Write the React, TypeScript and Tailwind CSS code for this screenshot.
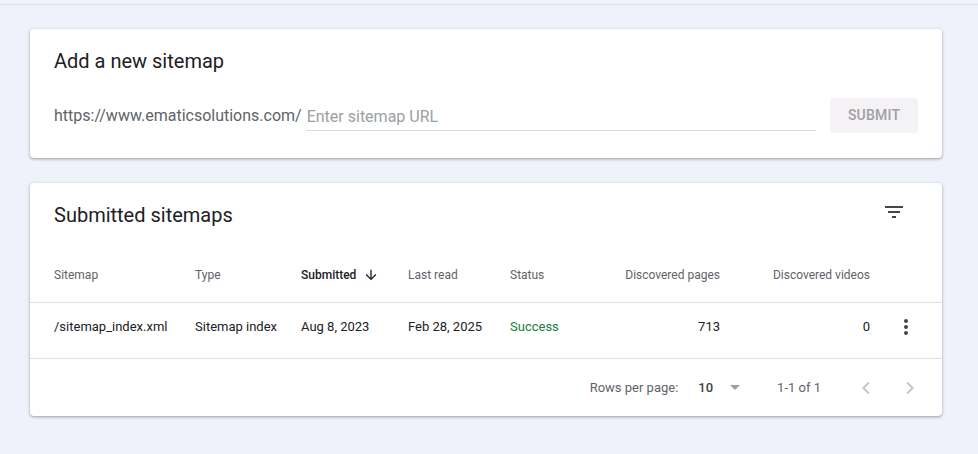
import React from 'react';

const FilterIcon = () => (
  <svg width="24" height="24" viewBox="0 0 24 24" className="fill-[#444746]">
    <path d="M10 18h4v-2h-4v2zM3 6v2h18V6H3zm3 7h12v-2H6v2z" />
  </svg>
);

const MoreVertIcon = () => (
  <svg width="24" height="24" viewBox="0 0 24 24" className="fill-[#444746]">
    <path d="M12 8c1.1 0 2-.9 2-2s-.9-2-2-2-2 .9-2 2 .9 2 2 2zm0 2c-1.1 0-2 .9-2 2s.9 2 2 2 2-.9 2-2-.9-2-2-2zm0 6c-1.1 0-2 .9-2 2s.9 2 2 2 2-.9 2-2-.9-2-2-2z" />
  </svg>
);

const ArrowDownIcon = () => (
  <svg width="16" height="16" viewBox="0 0 24 24" className="fill-[#202124]">
    <path d="M20 12l-1.41-1.41L13 16.17V4h-2v12.17l-5.58-5.59L4 12l8 8 8-8z" />
  </svg>
);

const ChevronLeft = () => (
  <svg width="24" height="24" viewBox="0 0 24 24" className="fill-[#c4c7c5]">
    <path d="M15.41 7.41L14 6l-6 6 6 6 1.41-1.41L10.83 12z" />
  </svg>
);

const ChevronRight = () => (
  <svg width="24" height="24" viewBox="0 0 24 24" className="fill-[#c4c7c5]">
    <path d="M10 6L8.59 7.41 13.17 12l-4.58 4.59L10 18l6-6z" />
  </svg>
);

const cardClass =
  'bg-white rounded-[4px] shadow-[0_1px_2px_rgba(60,64,67,0.3),0_1px_3px_1px_rgba(60,64,67,0.15)]';

const cols = 'grid grid-cols-[141px_106px_107px_102px_102px_1fr_150px_48px] px-6';

export default function App() {
  return (
    <div className="min-h-screen bg-[#f0f2fb] font-['Roboto',sans-serif] text-[#202124]">
      <div className="h-[4px]" />
      <div className="border-t border-[#dcdee6]" />

      <div className="pl-[30px] pt-6 pb-10 flex flex-col gap-[25px]">
        {/* add sitemap */}
        <div className={`${cardClass} w-[912px] h-[129px] px-6 pt-5`}>
          <h2 className="text-[20px] leading-6 font-normal">Add a new sitemap</h2>
          <div className="flex items-center mt-[25px]">
            <span className="text-[16px] text-[#5f6368] leading-5 mr-[4px] mt-[1px]">
              https://www.ematicsolutions.com/
            </span>
            <div className="w-[510px] h-[31px] border-b border-[#dadce0] flex items-end pb-[3px]">
              <span className="text-[16px] text-[#9aa0a6] leading-5 pl-[1px]">Enter sitemap URL</span>
            </div>
            <button className="ml-auto w-[88px] h-[35px] rounded-[4px] bg-[#f4f2f5] text-[14px] font-medium tracking-[0.2px] text-[#a0a0a5]">
              SUBMIT
            </button>
          </div>
        </div>

        {/* submitted list */}
        <div className={`${cardClass} w-[912px] h-[233px] flex flex-col`}>
          <div className="h-16 flex items-center justify-between pl-6 pr-9">
            <h2 className="text-[20px] leading-6 font-normal">Submitted sitemaps</h2>
            <div className="-mt-[6px]">
              <FilterIcon />
            </div>
          </div>

          <div className={`${cols} h-14 items-center text-[12px] text-[#5f6368] border-b border-[#e0e0e0]`}>
            <span>Sitemap</span>
            <span>Type</span>
            <span className="flex items-center gap-[7px] text-[#202124] font-medium">
              Submitted <ArrowDownIcon />
            </span>
            <span>Last read</span>
            <span>Status</span>
            <span className="text-right">Discovered pages</span>
            <span className="text-right">Discovered videos</span>
            <span />
          </div>

          <div className={`${cols} h-14 items-start pt-[14px] text-[13px] leading-5 border-b border-[#e0e0e0]`}>
            <span>/sitemap_index.xml</span>
            <span>Sitemap index</span>
            <span>Aug 8, 2023</span>
            <span>Feb 28, 2025</span>
            <span className="text-[#188038]">Success</span>
            <span className="text-right">713</span>
            <span className="text-right">0</span>
            <span className="flex justify-end -mt-[2px]">
              <MoreVertIcon />
            </span>
          </div>

          <div className="flex-1 flex items-center justify-end pr-5 text-[13px] text-[#5f6368]">
            <span>Rows per page:</span>
            <span className="ml-[20px] text-[#3c4043] font-medium">10</span>
            <span className="ml-[17px] w-0 h-0 border-l-[5px] border-r-[5px] border-t-[5px] border-l-transparent border-r-transparent border-t-[#9aa0a6]" />
            <span className="ml-[37px] mr-[33px]">1-1 of 1</span>
            <ChevronLeft />
            <span className="ml-[20px]">
              <ChevronRight />
            </span>
          </div>
        </div>
      </div>
    </div>
  );
}
